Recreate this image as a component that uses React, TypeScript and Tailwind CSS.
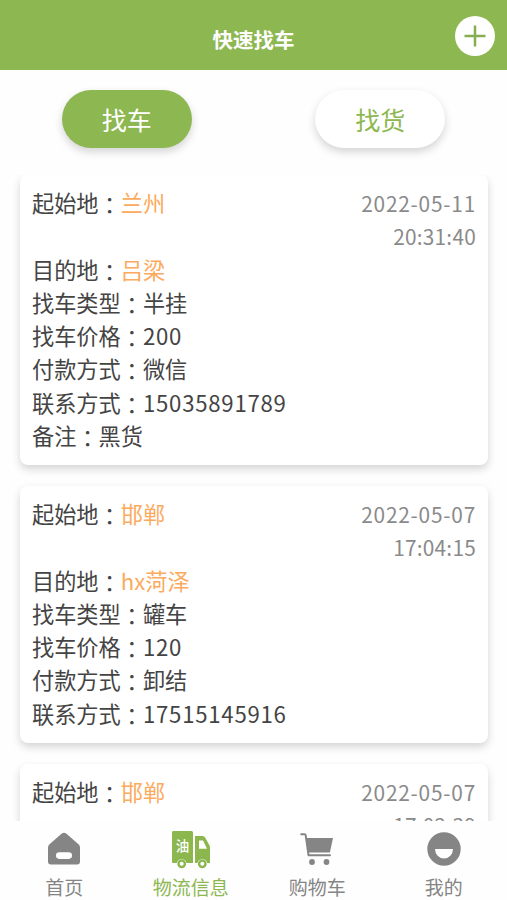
import React from "react";

type Listing = {
  from: string;
  to: string;
  date: string;
  time: string;
  rows: { label: string; value: string }[];
};

const listings: Listing[] = [
  {
    from: "兰州",
    to: "吕梁",
    date: "2022-05-11",
    time: "20:31:40",
    rows: [
      { label: "找车类型", value: "半挂" },
      { label: "找车价格", value: "200" },
      { label: "付款方式", value: "微信" },
      { label: "联系方式", value: "15035891789" },
      { label: "备注", value: "黑货" },
    ],
  },
  {
    from: "邯郸",
    to: "hx菏泽",
    date: "2022-05-07",
    time: "17:04:15",
    rows: [
      { label: "找车类型", value: "罐车" },
      { label: "找车价格", value: "120" },
      { label: "付款方式", value: "卸结" },
      { label: "联系方式", value: "17515145916" },
    ],
  },
  {
    from: "邯郸",
    to: "hx菏泽",
    date: "2022-05-07",
    time: "17:02:39",
    rows: [],
  },
];

function Label({ children }: { children: string }) {
  return (
    <span>
      {children}
      <span className="inline-block translate-y-[1.5px] font-['Noto_Sans_CJK_TC',sans-serif] leading-none" lang="zh-TW">：</span>
    </span>
  );
}

function Value({ children }: { children: string }) {
  const numeric = /^\d+$/.test(children);
  return <span className={numeric ? "tracking-[0.75px]" : ""}>{children}</span>;
}

function Card({ item }: { item: Listing }) {
  return (
    <article className="shrink-0 rounded-lg bg-white px-[12.5px] pt-[11px] pb-[13px] text-[22.2px] leading-[33.25px] text-[#444] shadow-[0_4px_8px_rgba(0,0,0,0.17)]">
      <div className="flex justify-between">
        <div>
          <Label>起始地</Label>
          <span className="text-[#fbaa5e]">{item.from}</span>
        </div>
        <div className="-mr-px pt-px text-right text-[20.8px] text-[#8a8a8a]">
          <div className="tracking-[0.8px]">{item.date}</div>
          <div className="tracking-[0.25px]">{item.time}</div>
        </div>
      </div>
      <div className="-mt-px">
        <Label>目的地</Label>
        <span className="text-[#fbaa5e]">{item.to}</span>
      </div>
      {item.rows.map((row) => (
        <div key={row.label}>
          <Label>{row.label}</Label>
          <Value>{row.value}</Value>
        </div>
      ))}
    </article>
  );
}

function HomeIcon() {
  return (
    <svg width="34" height="34" viewBox="0 0 34 34">
      <path d="M14.800 1.600Q17 -.2 19.200 1.600L31.500 12.200Q33 13.500 33 15.500V29.500Q33 32.500 30 32.500H4Q1 32.500 1 29.500V15.500Q1 13.500 2.500 12.200Z" fill="#858585" />
      <rect x="9" y="20.300" width="16" height="6.600" rx="3.300" fill="#fff" />
    </svg>
  );
}

function TruckIcon() {
  return (
    <svg width="40" height="39" viewBox="0 0 40 39">
      <path d="M2 1H20.500Q22 1 22 2.500V33H15.500A5 5 0 0 0 5.800 33H2Q1 33 1 32V2.500Q1 1 2 1Z" fill="#8cb74f" />
      <path d="M24 6H31.500Q33.300 6 34.300 7.800L38.500 15.500Q39 16.500 39 18V33H36.200A5 5 0 0 0 26.500 33H24Z" fill="#8cb74f" />
      <path d="M28 10.500H32L36 18.800H28Z" fill="#fff" />
      <circle cx="10.700" cy="33.800" r="3.200" fill="#fff" stroke="#8cb74f" strokeWidth="2.400" />
      <circle cx="31.300" cy="33.800" r="3.200" fill="#fff" stroke="#8cb74f" strokeWidth="2.400" />
      <text x="11.600" y="20.500" fontSize="13.500" fontWeight="500" textAnchor="middle" fill="#fff">油</text>
    </svg>
  );
}

function CartIcon() {
  return (
    <svg width="34" height="34" viewBox="0 0 34 34">
      <path d="M1.200 2.200H4.500Q5.500 2.200 5.700 3.300L8.500 23.200H30" fill="none" stroke="#858585" strokeWidth="2" strokeLinecap="round" strokeLinejoin="round" />
      <path d="M6 6H33L29.900 20.600H8.200Z" fill="#858585" />
      <circle cx="12" cy="30" r="2.900" fill="#858585" />
      <circle cx="26.500" cy="30" r="2.900" fill="#858585" />
    </svg>
  );
}

function ProfileIcon() {
  return (
    <svg width="34" height="34" viewBox="0 0 34 34">
      <circle cx="17" cy="17" r="16.700" fill="#858585" />
      <path d="M8 17H26A9 9.500 0 0 1 8 17Z" fill="#fff" />
    </svg>
  );
}

const tabs = [
  { label: "首页", icon: <HomeIcon />, active: false },
  { label: "物流信息", icon: <TruckIcon />, active: true },
  { label: "购物车", icon: <CartIcon />, active: false },
  { label: "我的", icon: <ProfileIcon />, active: false },
];

export default function App() {
  return (
    <div lang="zh-CN" className="flex h-[900px] w-[507px] flex-col overflow-hidden bg-[#fefefe] font-['Noto_Sans_CJK_SC',sans-serif]">
      <header className="grid h-[69.5px] shrink-0 grid-cols-[1fr_auto_1fr] items-center bg-[#8db750] px-3 pt-[2.5px]">
        <span />
        <h1 className="pt-1.5 text-[20.5px] font-bold text-white">快速找车</h1>
        <button className="flex size-10 items-center justify-center justify-self-end rounded-full bg-white" aria-label="添加">
          <svg width="22" height="22" viewBox="0 0 22 22">
            <path d="M11 .5V21.500M.5 11H21.500" stroke="#86ad50" strokeWidth="2.500" />
          </svg>
        </button>
      </header>

      <div className="grid h-[105.5px] shrink-0 grid-cols-2 justify-items-center pt-5">
        <button className="h-[58.5px] w-[130px] rounded-full bg-[#8db750] pt-0.5 text-[25px] text-white shadow-[0_4px_8px_rgba(0,0,0,0.17)]">
          找车
        </button>
        <button className="h-[58.5px] w-[130px] rounded-full bg-white pt-0.5 text-[25px] text-[#8db750] shadow-[0_4px_8px_rgba(0,0,0,0.17)]">
          找货
        </button>
      </div>

      <main className="flex min-h-0 flex-1 flex-col gap-[21px] overflow-hidden px-[19.5px]">
        {listings.map((item, index) => (
          <Card key={index} item={item} />
        ))}
      </main>

      <nav className="grid h-[79.5px] shrink-0 grid-cols-4 bg-[#fefefe] pl-px">
        {tabs.map((tab) => (
          <button key={tab.label} className="flex flex-col items-center">
            <span className="flex h-[53.5px] items-center justify-center pt-1">{tab.icon}</span>
            <span className={tab.active ? "text-[19px] leading-[26px] text-[#8db750]" : "text-[19px] leading-[26px] text-[#858585]"}>
              {tab.label}
            </span>
          </button>
        ))}
      </nav>
    </div>
  );
}
